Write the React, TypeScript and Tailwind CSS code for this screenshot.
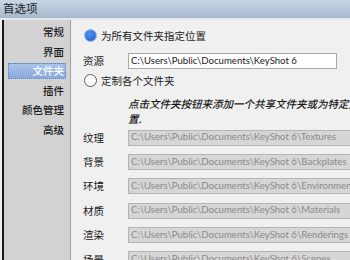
const cjk = { fontFamily: '"Noto Sans CJK SC", "Noto Sans", sans-serif' };
const latin = { fontFamily: 'Lato, "Noto Sans", "Noto Sans CJK SC", sans-serif' };

const navItems = ["常规", "界面", "文件夹", "插件", "颜色管理", "高级"];

const folders = [
  { label: "纹理", path: "C:\\Users\\Public\\Documents\\KeyShot 6\\Textures" },
  { label: "背景", path: "C:\\Users\\Public\\Documents\\KeyShot 6\\Backplates" },
  { label: "环境", path: "C:\\Users\\Public\\Documents\\KeyShot 6\\Environments" },
  { label: "材质", path: "C:\\Users\\Public\\Documents\\KeyShot 6\\Materials" },
  { label: "渲染", path: "C:\\Users\\Public\\Documents\\KeyShot 6\\Renderings" },
  { label: "场景", path: "C:\\Users\\Public\\Documents\\KeyShot 6\\Scenes" },
];

const Radio = ({ checked }: { checked?: boolean }) =>
  checked ? (
    <span className="flex h-[13px] w-[13px] items-center justify-center rounded-full border border-[#8fb0e0] bg-[#dfe9f7]">
      <span className="h-[11px] w-[11px] rounded-full bg-[radial-gradient(circle_at_40%_35%,#4f8ff0,#1f5fd0)]" />
    </span>
  ) : (
    <span className="h-[13px] w-[13px] rounded-full border border-[#5a5a5a] bg-white" />
  );

export default function App() {
  return (
    <div className="h-[260px] w-[350px] overflow-hidden bg-[#f0f0f0] text-[#1a1a1a]" style={cjk}>
      <div className="flex h-[18px] items-center bg-gradient-to-b from-[#c9d6e6] to-[#a6b8cd] pl-[3px] text-[11.5px] text-[#1c1c1c]">
        首选项
      </div>
      <div className="h-[2px] bg-[#e6e6e6]" />
      <div className="flex h-[240px]">
        <div className="ml-[2px] w-[69px] shrink-0 border-l-2 border-r border-l-[#1a1a1a] border-r-[#a0a0a0] bg-[#d2d2d2] pt-[4px]">
          <div className="flex flex-col items-end gap-[3.5px] pr-[4px] text-[10.5px] font-medium">
            {navItems.map((item) => (
              <div
                key={item}
                className={
                  item === "文件夹"
                    ? "flex h-[16px] w-[58px] items-center justify-end border border-dotted border-[#5a7fc0] bg-gradient-to-b from-[#a9c4ea] to-[#8aa9dc] pr-[1px] text-white"
                    : "flex h-[16px] items-center pr-[2px]"
                }
              >
                {item}
              </div>
            ))}
          </div>
        </div>
        <div className="flex w-[400px] shrink-0 flex-col pl-[12px] text-[10.5px]">
          <div className="mt-[8px] flex h-[16px] items-center gap-[4px] pl-[1px]">
            <Radio checked />
            <span>为所有文件夹指定位置</span>
          </div>
          <div className="mt-[9px] flex h-[16px] items-center">
            <span className="w-[45px]">资源</span>
            <div
              className="flex h-[16px] w-[209px] items-center border border-[#a8a8a8] bg-white pl-[2px] text-[9.6px] text-[#202020]"
              style={latin}
            >
              C:\Users\Public\Documents\KeyShot 6
            </div>
          </div>
          <div className="mt-[4px] flex h-[16px] items-center gap-[4px] pl-[1px]">
            <Radio />
            <span>定制各个文件夹</span>
          </div>
          <div className="mt-[7px] pl-[45px] text-[10.5px] leading-[15px] font-medium italic">
            <div className="whitespace-nowrap">点击文件夹按钮来添加一个共享文件夹或为特定资源类型设置位</div>
            <div>置.</div>
          </div>
          <div className="mt-[4px] flex flex-col gap-[8.4px]">
            {folders.map((f) => (
              <div key={f.label} className="flex h-[16px] items-center">
                <span className="w-[45px]">{f.label}</span>
                <div
                  className="flex h-[16px] w-[260px] items-center overflow-hidden whitespace-nowrap border border-[#b4b4b4] bg-[#d6d6d6] pl-[2px] text-[9.6px] text-[#8a8a8a]"
                  style={latin}
                >
                  {f.path}
                </div>
              </div>
            ))}
          </div>
        </div>
      </div>
    </div>
  );
}
